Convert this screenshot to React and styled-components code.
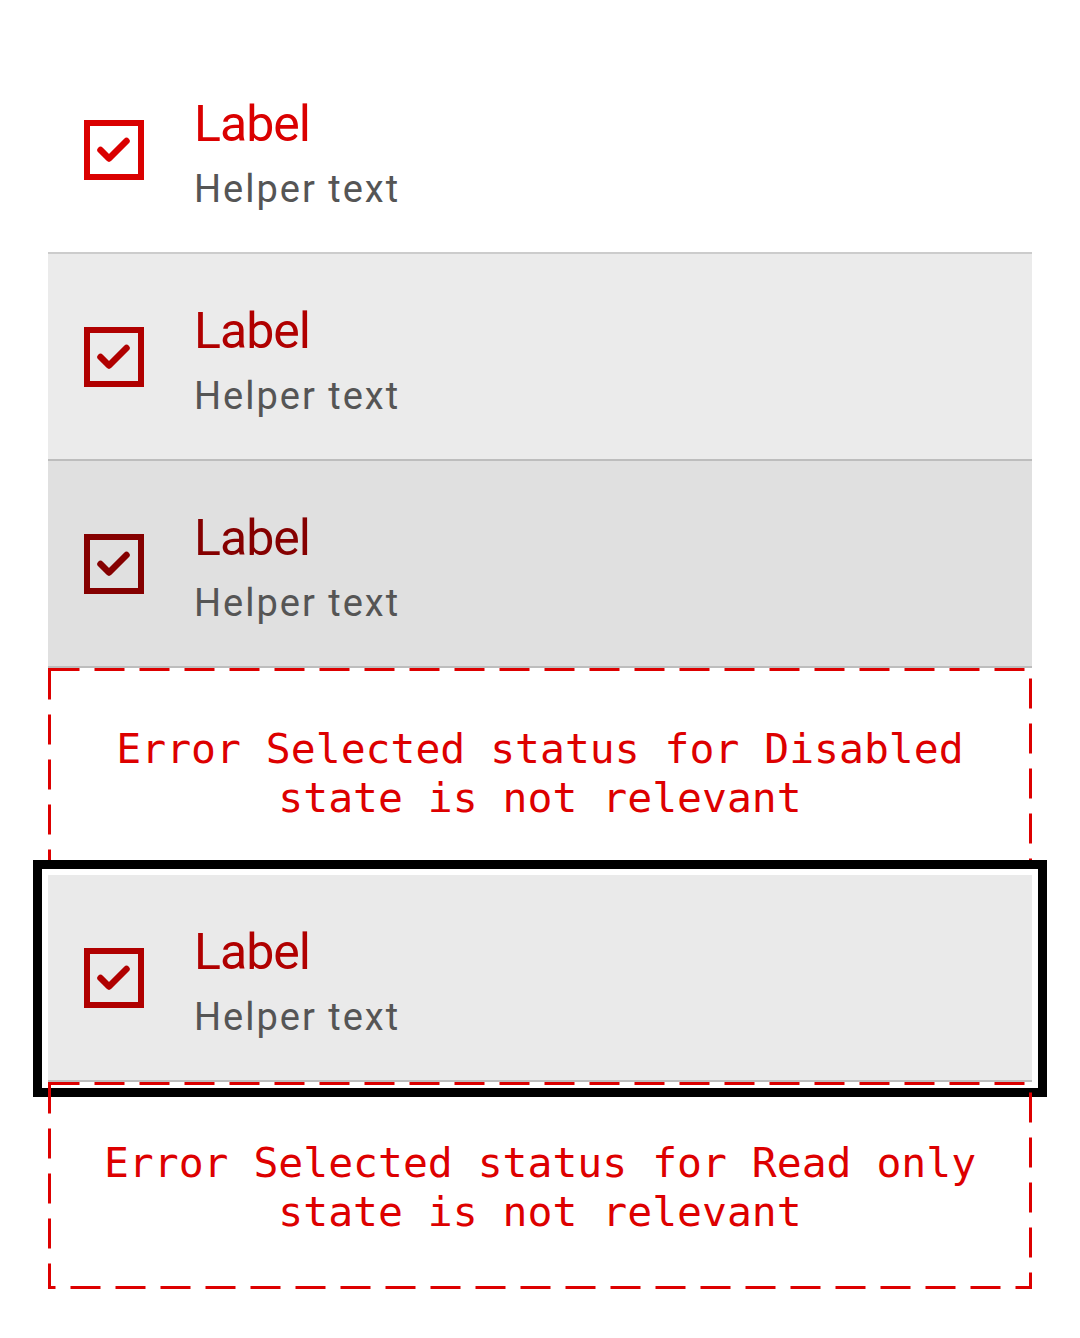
import React from "react";
import styled, { createGlobalStyle } from "styled-components";

const GlobalStyle = createGlobalStyle`
  body {
    margin: 0;
    background: #ffffff;
  }
`;

const Page = styled.div`
  width: 1080px;
  min-height: 1338px;
  box-sizing: border-box;
  padding: 47px 48px 0;
  background: #ffffff;
`;

const List = styled.div`
  display: flex;
  flex-direction: column;
`;

const Row = styled.div`
  display: flex;
  align-items: center;
  height: 205px;
  padding-left: 36px;
  gap: 50px;
  background: ${(p) => p.$bg};
  border-bottom: 2px solid ${(p) => p.$line};
  ${(p) =>
    p.$framed &&
    `
    position: relative;
    z-index: 1;
    box-shadow: 0 0 0 6px #ffffff, 0 0 0 15px #000000;
  `}
`;

const TextCol = styled.div`
  display: flex;
  flex-direction: column;
  margin-top: 8px;
  font-family: Roboto, "Liberation Sans", sans-serif;
`;

const Label = styled.div`
  font-size: 50px;
  line-height: 60px;
  letter-spacing: -1px;
  color: ${(p) => p.$tone};
`;

const Helper = styled.div`
  margin-top: 11px;
  font-size: 38px;
  line-height: 48px;
  letter-spacing: 2px;
  color: #555555;
`;

const ErrorBox = styled.div`
  position: relative;
  z-index: ${(p) => (p.$raised ? 2 : "auto")};
  height: 207px;
  box-sizing: border-box;
  padding: 4px 16px 0;
  display: flex;
  align-items: center;
  justify-content: center;
  text-align: center;
  font-family: "DejaVu Sans Mono", "Liberation Mono", monospace;
  font-size: 41.4px;
  line-height: 49px;
  color: #dd0000;
`;

const Dashes = styled.svg`
  position: absolute;
  inset: 0;
  width: 100%;
  height: 100%;
  pointer-events: none;
  overflow: visible;
`;

const Checkbox = ({ tone }) => (
  <svg width="60" height="60" viewBox="0 0 60 60">
    <rect x="3" y="3" width="54" height="54" fill="none" stroke={tone} strokeWidth="6" />
    <polyline
      points="16.5,30 25,38.5 42.5,21"
      fill="none"
      stroke={tone}
      strokeWidth="6.5"
      strokeLinecap="round"
      strokeLinejoin="round"
    />
  </svg>
);

const Item = ({ bg, line, tone, framed }) => (
  <Row $bg={bg} $line={line} $framed={framed}>
    <Checkbox tone={tone} />
    <TextCol>
      <Label $tone={tone}>Label</Label>
      <Helper>Helper text</Helper>
    </TextCol>
  </Row>
);

const ErrorNote = ({ children, raised }) => (
  <ErrorBox $raised={raised}>
    <Dashes>
      <rect
        x="1.5"
        y="1.5"
        width="981"
        height="204"
        fill="none"
        stroke="#dd0000"
        strokeWidth="3"
        strokeDasharray="30 15"
      />
    </Dashes>
    <span>{children}</span>
  </ErrorBox>
);

export default function App() {
  return (
    <Page>
      <GlobalStyle />
      <List>
        <Item bg="#ffffff" line="#cccccc" tone="#da0000" />
        <Item bg="#ebebeb" line="#bdbdbd" tone="#b00000" />
        <Item bg="#e0e0e0" line="#bdbdbd" tone="#850000" />
        <ErrorNote>Error Selected status for Disabled state is not relevant</ErrorNote>
        <Item bg="#eaeaea" line="#bdbdbd" tone="#b00000" framed />
        <ErrorNote raised>Error Selected status for Read only state is not relevant</ErrorNote>
      </List>
    </Page>
  );
}
